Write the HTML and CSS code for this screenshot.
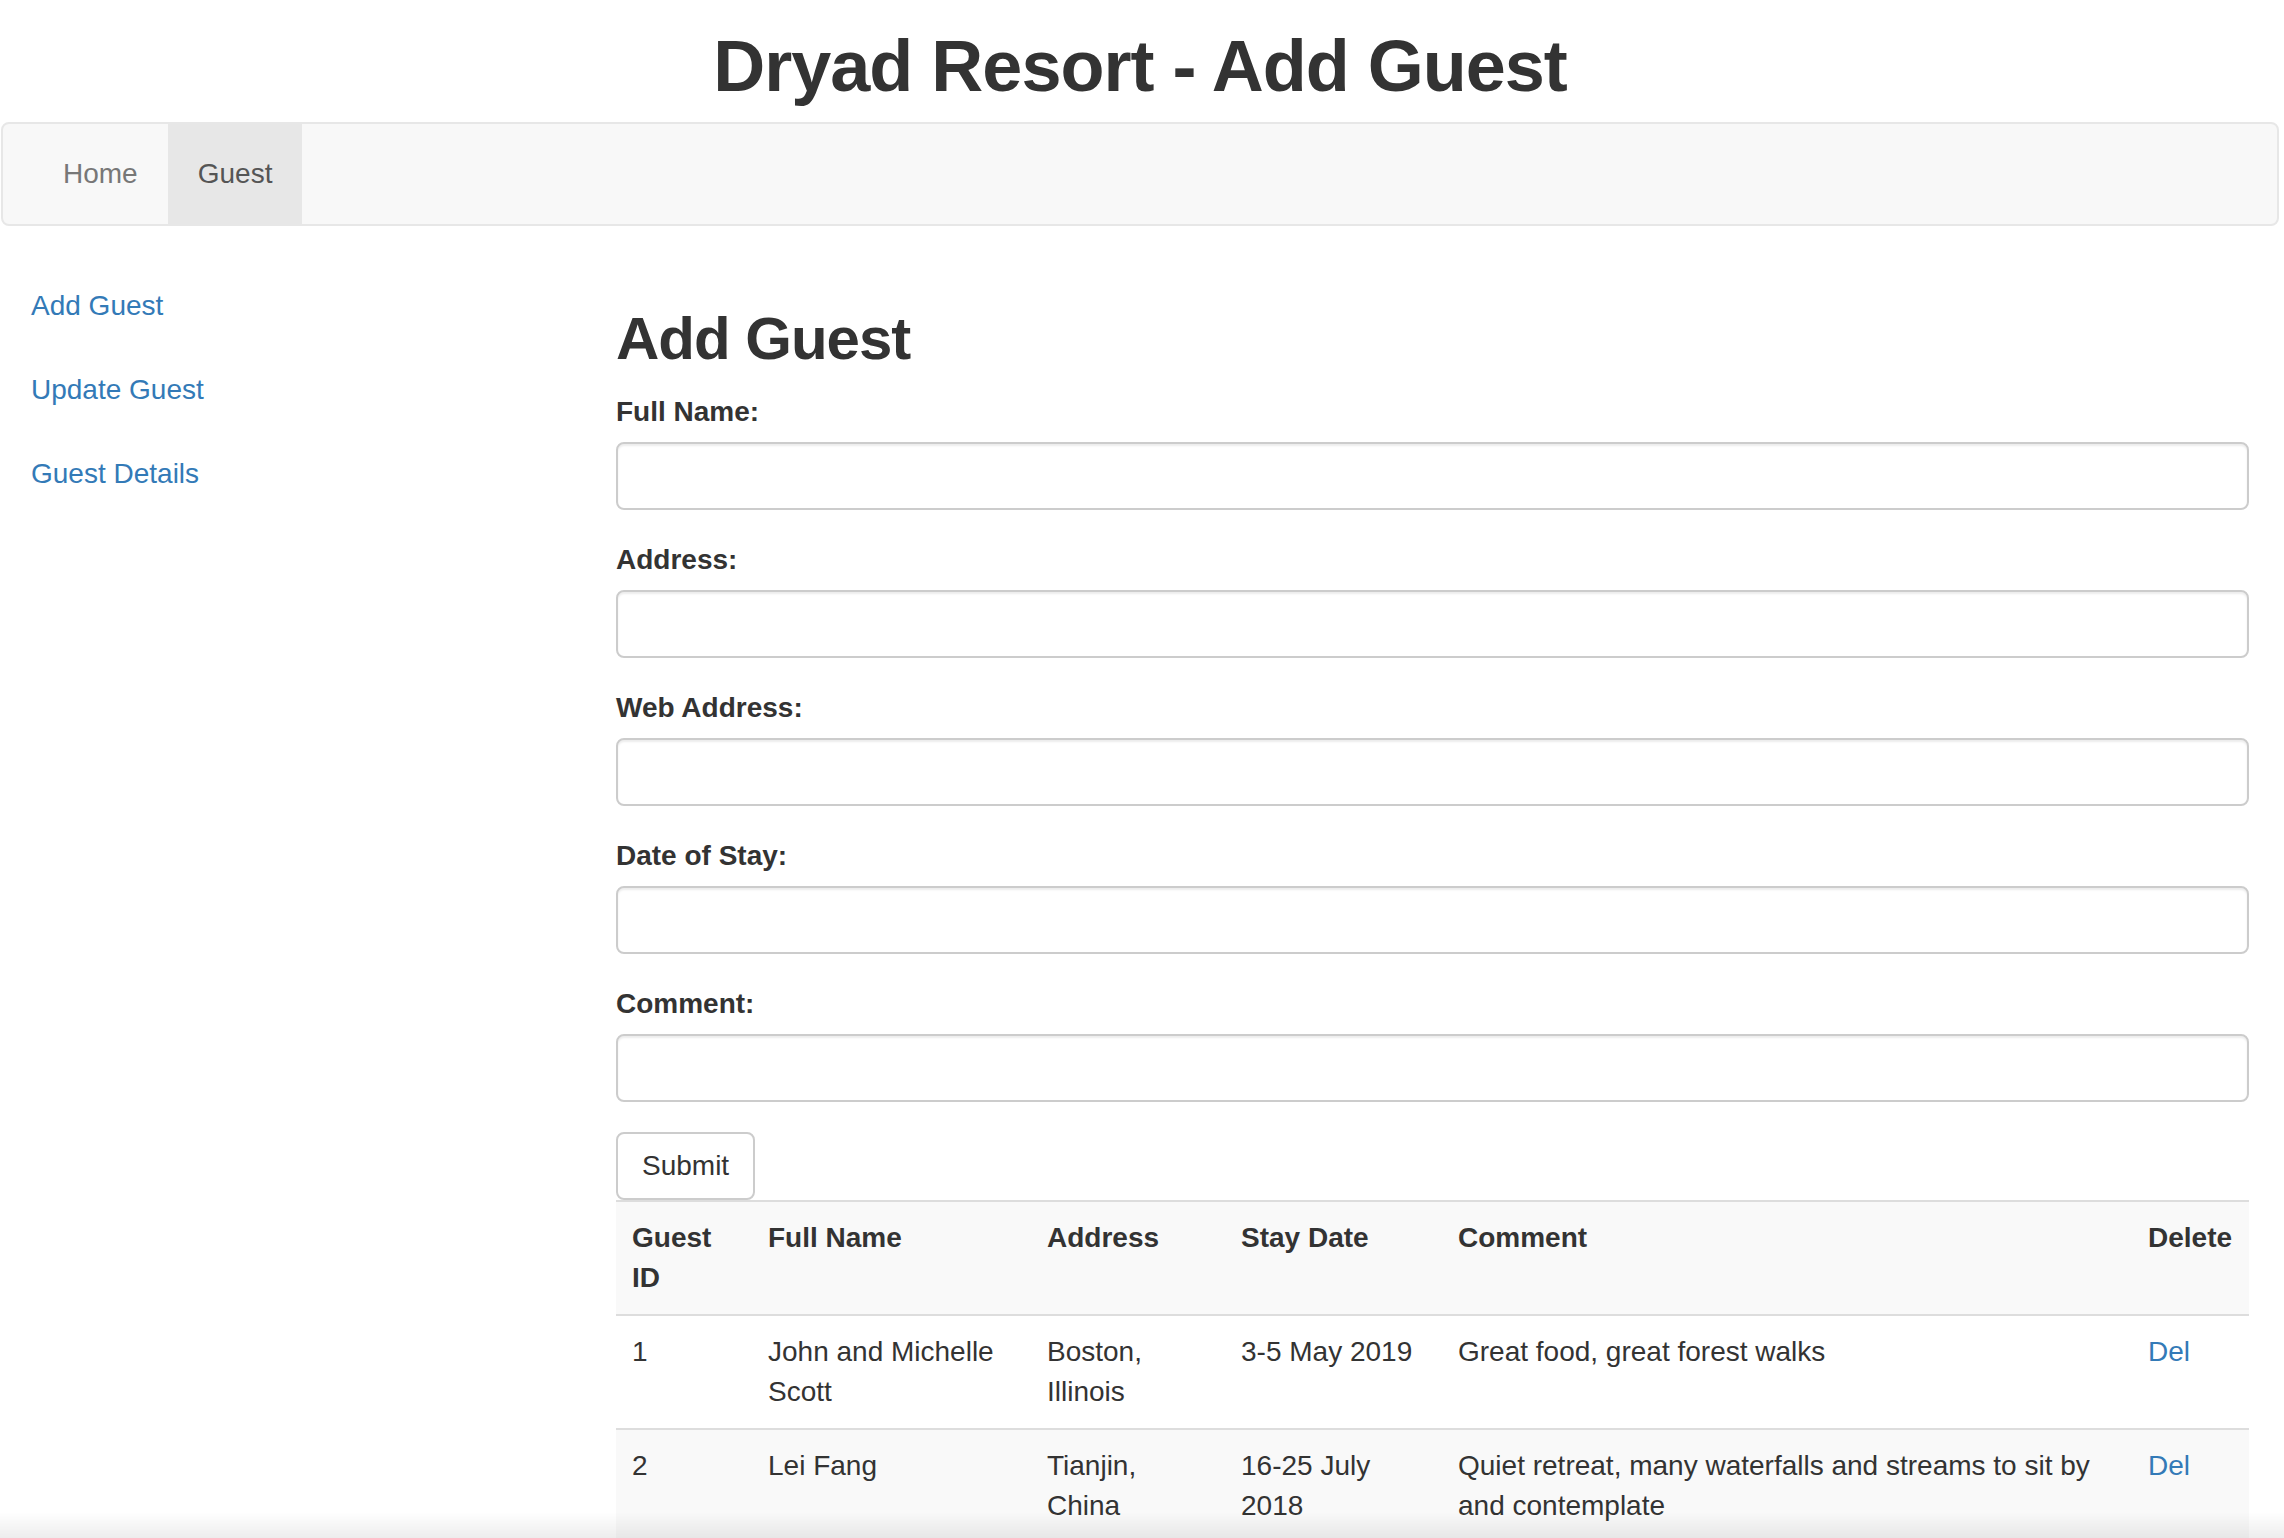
FILE: index.html
```html
<!DOCTYPE html>
<html lang="en">
<head>
<meta charset="utf-8">
<title>Dryad Resort - Add Guest</title>
<link rel="stylesheet" href="styles.css">
</head>
<body>
<div class="page">
  <h1 class="site-title">Dryad Resort - Add Guest</h1>
  <nav class="navbar">
    <ul class="nav-links">
      <li><a class="nav-link" href="#">Home</a></li>
      <li><a class="nav-link active" href="#">Guest</a></li>
    </ul>
  </nav>
  <div class="layout">
    <aside class="sidebar">
      <ul class="side-nav">
        <li><a href="#">Add Guest</a></li>
        <li><a href="#">Update Guest</a></li>
        <li><a href="#">Guest Details</a></li>
      </ul>
    </aside>
    <main class="content">
      <h2 class="page-heading">Add Guest</h2>
      <form class="guest-form">
        <div class="form-group">
          <label class="form-label">Full Name:</label>
          <input class="form-control" type="text">
        </div>
        <div class="form-group">
          <label class="form-label">Address:</label>
          <input class="form-control" type="text">
        </div>
        <div class="form-group">
          <label class="form-label">Web Address:</label>
          <input class="form-control" type="text">
        </div>
        <div class="form-group">
          <label class="form-label">Date of Stay:</label>
          <input class="form-control" type="text">
        </div>
        <div class="form-group">
          <label class="form-label">Comment:</label>
          <input class="form-control" type="text">
        </div>
        <button class="btn" type="button">Submit</button>
      </form>
      <table class="guest-table">
        <colgroup>
          <col class="col-id">
          <col class="col-name">
          <col class="col-address">
          <col class="col-date">
          <col class="col-comment">
          <col class="col-delete">
        </colgroup>
        <tbody>
          <tr>
            <th>Guest ID</th>
            <th>Full Name</th>
            <th>Address</th>
            <th>Stay Date</th>
            <th>Comment</th>
            <th>Delete</th>
          </tr>
          <tr>
            <td>1</td>
            <td>John and Michelle Scott</td>
            <td>Boston, Illinois</td>
            <td>3-5 May 2019</td>
            <td>Great food, great forest walks</td>
            <td><a href="#">Del</a></td>
          </tr>
          <tr>
            <td>2</td>
            <td>Lei Fang</td>
            <td>Tianjin, China</td>
            <td>16-25 July 2018</td>
            <td>Quiet retreat, many waterfalls and streams to sit by and contemplate</td>
            <td><a href="#">Del</a></td>
          </tr>
        </tbody>
      </table>
    </main>
  </div>
</div>
<div class="bottom-shade"></div>
</body>
</html>
```

FILE: styles.css
```css
* {
  box-sizing: border-box;
}

html, body {
  margin: 0;
  padding: 0;
  background: #ffffff;
}

body {
  font-family: "Liberation Sans", Arial, Helvetica, sans-serif;
  font-size: 28px;
  line-height: 40px;
  color: #333333;
  overflow: hidden;
}

a {
  color: #337ab7;
  text-decoration: none;
}

.page {
  margin: 0 5px 0 1px;
}

.site-title {
  margin: 27px 0 16px;
  font-size: 72px;
  line-height: 79px;
  font-weight: bold;
  letter-spacing: -1px;
  text-align: center;
  color: #333333;
}

.navbar {
  height: 104px;
  background: #f8f8f8;
  border: 2px solid #e7e7e7;
  border-radius: 8px;
  margin-bottom: 40px;
  padding: 0 30px;
}

.nav-links {
  list-style: none;
  margin: 0;
  padding: 0;
  display: flex;
}

.nav-link {
  display: block;
  padding: 30px 30px;
  line-height: 40px;
  color: #777777;
}

.nav-link.active {
  background: #e7e7e7;
  color: #555555;
}

.layout {
  display: grid;
  grid-template-columns: 615px 1fr;
}

.side-nav {
  list-style: none;
  margin: 0;
  padding: 0;
}

.side-nav li + li {
  margin-top: 4px;
}

.side-nav a {
  display: block;
  padding: 20px 30px;
  border-radius: 8px;
  line-height: 40px;
}

.content {
  padding-right: 30px;
}

.page-heading {
  margin: 40px 0 20px;
  font-size: 60px;
  line-height: 66px;
  font-weight: bold;
  letter-spacing: -1px;
}

.form-group {
  margin-bottom: 30px;
}

.form-label {
  display: block;
  font-weight: bold;
  margin-bottom: 10px;
  line-height: 40px;
}

.form-control {
  display: block;
  width: 100%;
  height: 68px;
  padding: 12px 24px;
  font: inherit;
  color: #555555;
  background: #ffffff;
  border: 2px solid #cccccc;
  border-radius: 8px;
  box-shadow: inset 0 2px 2px rgba(0, 0, 0, 0.075);
  outline: none;
}

.btn {
  display: block;
  height: 68px;
  padding: 12px 24px;
  font: inherit;
  line-height: 40px;
  color: #333333;
  background: #ffffff;
  border: 2px solid #cccccc;
  border-radius: 8px;
}

.guest-table {
  width: 100%;
  border-collapse: collapse;
  border-spacing: 0;
  table-layout: fixed;
}

.col-id { width: 136px; }
.col-name { width: 279px; }
.col-address { width: 194px; }
.col-date { width: 217px; }
.col-comment { width: 690px; }
.col-delete { width: 117px; }

.guest-table th,
.guest-table td {
  padding: 16px;
  line-height: 40px;
  text-align: left;
  vertical-align: top;
  border-top: 2px solid #dddddd;
}

.guest-table th {
  font-weight: bold;
}

.guest-table tr:nth-child(odd) {
  background: #f9f9f9;
}

.bottom-shade {
  position: fixed;
  left: 0;
  right: 0;
  bottom: 0;
  height: 26px;
  background: linear-gradient(to bottom, rgba(0, 0, 0, 0), rgba(0, 0, 0, 0.07));
  pointer-events: none;
}
```
